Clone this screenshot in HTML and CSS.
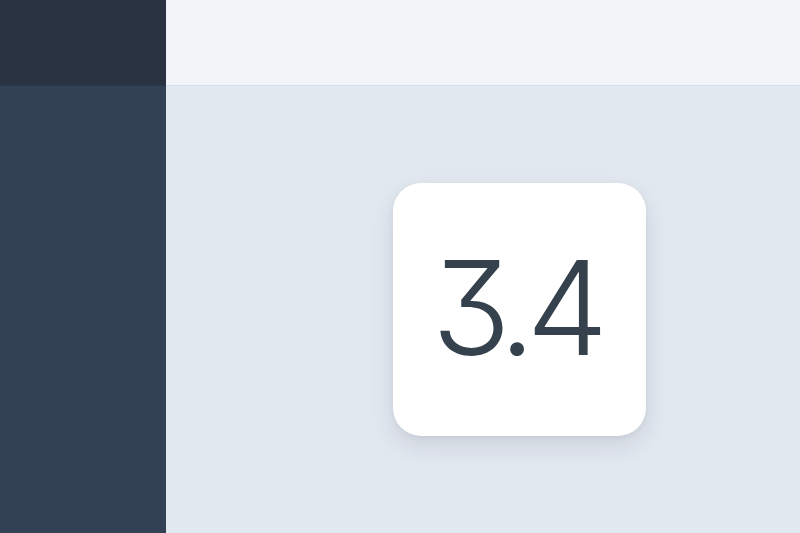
FILE: index.html
```html
<!DOCTYPE html>
<html>
<head>
<meta charset="utf-8">
<link rel="stylesheet" href="styles.css">
</head>
<body>
<div class="app">
  <aside class="sidebar">
    <div class="sidebar-head"></div>
    <div class="sidebar-body"></div>
  </aside>
  <main class="main">
    <header class="topbar"></header>
    <section class="content">
      <div class="card"><span class="value">3.4</span></div>
    </section>
  </main>
</div>
</body>
</html>
```
FILE: styles.css
```css
html, body {
  margin: 0;
  padding: 0;
  height: 100%;
}
body {
  font-family: Inter, "Noto Sans", sans-serif;
  background: #e2e8f0;
}
.app {
  display: flex;
  height: 533px;
}
.sidebar {
  width: 166px;
  flex: 0 0 166px;
  display: flex;
  flex-direction: column;
  background: #334155;
}
.sidebar-head {
  height: 85px;
  background: #283240;
  border-bottom: 1px solid #2d3846;
}
.sidebar-body {
  flex: 1;
}
.main {
  flex: 1;
  display: flex;
  flex-direction: column;
}
.topbar {
  height: 85px;
  background: #f1f5f9;
  border-bottom: 1px solid #d9e0e8;
}
.content {
  flex: 1;
  display: flex;
  align-items: center;
  justify-content: center;
  padding-left: 73px;
}
.card {
  width: 253px;
  height: 253px;
  background: #ffffff;
  border-radius: 28px;
  box-shadow: 0 10px 24px rgba(15, 23, 42, 0.10), 0 2px 6px rgba(15, 23, 42, 0.05);
  display: flex;
  align-items: center;
  justify-content: center;
}
.value {
  font-size: 130px;
  font-weight: 350;
  color: #36414e;
  line-height: 1;
  letter-spacing: -9px;
  font-feature-settings: "cv09" 1;
  padding-bottom: 4px;
  padding-right: 8px;
}
```
